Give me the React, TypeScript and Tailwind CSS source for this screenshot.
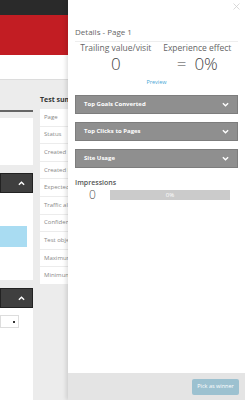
import React from "react";

const rows = [
  "Page",
  "Status",
  "Created",
  "Created by",
  "Expected",
  "Traffic allocation",
  "Confidence",
  "Test objective",
  "Maximum",
  "Minimum",
];

const bars = ["Top Goals Converted", "Top Clicks to Pages", "Site Usage"];

const Chevron = ({ up }: { up?: boolean }) => (
  <svg width="7" height="5" viewBox="0 0 8 5" className={up ? "rotate-180" : ""}>
    <path d="M1 1l3 3 3-3" fill="none" stroke="white" strokeWidth="1.6" />
  </svg>
);

export default function App() {
  return (
    <div
      className="relative w-[245px] h-[400px] overflow-hidden bg-[#ececec]"
      style={{ fontFamily: '"Open Sans", sans-serif' }}
    >
      {/* page behind the drawer */}
      <div className="h-[15px] bg-[#2a2a2a]" />
      <div className="h-[40px] bg-[#c21d23]" />
      <div className="h-[25px] bg-white border-b border-[#dcdcdc]" />
      <div className="flex gap-[7px]">
        <div className="w-[33px] flex flex-col pt-[30px]">
          <div className="h-[2px] bg-[#666]" />
          <div className="h-[47px] mt-[6px] bg-white" />
          <div className="h-[20px] mt-[8px] bg-[#3f3f3f] border border-[#222] flex items-center justify-end pr-[7px]">
            <Chevron up />
          </div>
          <div className="h-[87px] bg-white pt-[33px]">
            <div className="w-[27px] h-[21px] bg-[#a9dcf2]" />
          </div>
          <div className="h-[20px] mt-[8px] bg-[#3f3f3f] border border-[#222] flex items-center justify-end pr-[7px]">
            <Chevron up />
          </div>
          <div className="h-[100px] bg-white pt-[7px]">
            <div className="w-[19px] h-[13px] border border-[#ddd] flex items-center justify-end pr-[3px]">
              <div className="w-[2px] h-[2px] bg-[#333]" />
            </div>
          </div>
        </div>
        <div className="w-[110px] pt-[16px] whitespace-nowrap">
          <div className="text-[7px] font-bold text-[#333] h-[13px] leading-[8px]">Test summary</div>
          {rows.map((r) => (
            <div
              key={r}
              className="h-[17.6px] bg-white border-b border-[#ececec] pl-[4px] flex items-center text-[6px] text-[#888]"
            >
              {r}
            </div>
          ))}
        </div>
      </div>

      {/* details drawer */}
      <div className="absolute top-0 right-0 w-[177px] h-[400px] bg-white flex flex-col shadow-[-2px_0_4px_rgba(0,0,0,0.12)]">
        <div className="flex-1 px-[7px] relative">
          <svg
            className="absolute right-[5px] top-[3px]"
            width="7"
            height="7"
            viewBox="0 0 7 7"
          >
            <path d="M0.5 0.5l6 6M6.5 0.5l-6 6" stroke="#cfcfcf" strokeWidth="0.8" />
          </svg>
          <div className="pt-[26px] pb-[3px] text-[8px] leading-[12px] text-[#666] border-b border-[#eee]">
            Details - Page 1
          </div>
          <div className="flex">
            <div className="flex-1 flex flex-col items-center">
              <div className="text-[8.5px] leading-[12px] text-[#666]">Trailing value/visit</div>
              <div className="text-[17px] leading-[19px] text-[#444] font-light">0</div>
            </div>
            <div className="flex-1 flex flex-col items-center">
              <div className="text-[8.5px] leading-[12px] text-[#666]">Experience effect</div>
              <div className="text-[17px] leading-[19px] text-[#444] font-light">
                <span className="mr-[8px]">=</span>0%
              </div>
            </div>
          </div>
          <div className="text-center text-[5.5px] leading-[8px] text-[#4aa8d6] mt-[5px]">Preview</div>
          <div className="mt-[9px] flex flex-col gap-[8px]">
            {bars.map((b) => (
              <div
                key={b}
                className="h-[19px] bg-[#8f8f8f] border border-[#7d7d7d] flex items-center justify-between pl-[8px] pr-[8px]"
              >
                <span className="text-[6px] font-bold text-white">{b}</span>
                <Chevron />
              </div>
            ))}
          </div>
          <div className="mt-[10px] text-[7px] leading-[9px] font-semibold text-[#555]">Impressions</div>
          <div className="flex items-center mt-[1px]">
            <div className="w-[35px] text-center text-[12px] leading-[14px] text-[#555] font-light">0</div>
            <div className="w-[120px] h-[10px] bg-[#cbcbcb] flex items-center justify-center text-[6px] text-white">
              0%
            </div>
          </div>
        </div>
        <div className="h-[27px] bg-[#e4e4e4] flex items-center justify-end pr-[6px]">
          <div className="w-[47px] h-[16px] rounded-[2px] bg-[#9cc1d0] flex items-center justify-center text-[5.5px] text-white">
            Pick as winner
          </div>
        </div>
      </div>
    </div>
  );
}
